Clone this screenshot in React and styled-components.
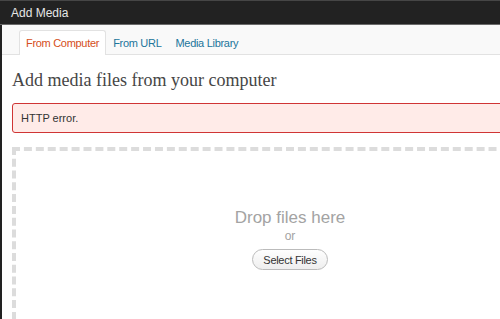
import React from "react";
import styled, { createGlobalStyle } from "styled-components";

const Global = createGlobalStyle`
  html, body { margin: 0; padding: 0; background: #fff; overflow: hidden; }
  body { width: 500px; height: 319px; font-family: "Liberation Sans", Arial, sans-serif; }
`;

const Modal = styled.div`
  width: 500px;
  height: 319px;
  display: flex;
  flex-direction: column;
  background: #222;
  overflow: hidden;
`;

const TitleBar = styled.div`
  height: 23px;
  flex: none;
  background: #222;
  border-top: 1px solid #464646;
  border-bottom: 1px solid #6a6a6a;
  padding-left: 11px;
  display: flex;
  align-items: center;
  color: #e6e6e6;
  font-size: 12px;
`;

const Body = styled.div`
  flex: 1;
  margin-left: 2px;
  background: #fff;
  display: flex;
  flex-direction: column;
  min-height: 0;
`;

const TabBar = styled.div`
  flex: none;
  height: 29px;
  background: #f9f9f9;
  border-bottom: 1px solid #e2e2e2;
  display: flex;
  align-items: flex-end;
  padding-left: 17px;
`;

const Tab = styled.div`
  height: 25px;
  box-sizing: border-box;
  padding: 0 6px;
  display: flex;
  align-items: center;
  font-size: 11px;
  letter-spacing: -0.3px;
  color: ${(p) => (p.$active ? "#d54e21" : "#21759b")};
  background: ${(p) => (p.$active ? "#fff" : "transparent")};
  border: 1px solid ${(p) => (p.$active ? "#e2e2e2" : "transparent")};
  border-bottom: none;
  border-radius: 3px 3px 0 0;
  margin-bottom: -1px;
`;

const Content = styled.div`
  padding-left: 10px;
  display: flex;
  flex-direction: column;
`;

const Heading = styled.h3`
  margin: 14px 0 0;
  font-family: "Liberation Serif", Georgia, serif;
  font-weight: normal;
  font-size: 18px;
  line-height: 22px;
  color: #464646;
`;

const ErrorBox = styled.div`
  margin-top: 12px;
  height: 30px;
  box-sizing: border-box;
  width: 520px;
  background: #ffebe8;
  border: 1px solid #d03535;
  border-radius: 3px;
  padding: 0 8px;
  display: flex;
  align-items: center;
  font-size: 11px;
  color: #333;
`;

const DropZone = styled.div`
  margin-top: 14px;
  width: 556px;
  height: 220px;
  box-sizing: border-box;
  border: 4px dashed #dcdcdc;
  display: flex;
  flex-direction: column;
  align-items: center;
  padding-top: 57px;
`;

const DropTitle = styled.div`
  font-size: 17px;
  line-height: 20px;
  color: #a3a3a3;
`;

const Or = styled.div`
  font-size: 12px;
  line-height: 16px;
  color: #a3a3a3;
`;

const SelectButton = styled.button`
  margin-top: 5px;
  height: 21px;
  padding: 0 10px;
  border: 1px solid #bbb;
  border-radius: 11px;
  background: linear-gradient(#fefefe, #eeeeee);
  font-family: "Liberation Sans", Arial, sans-serif;
  font-size: 11px;
  color: #333;
  letter-spacing: -0.3px;
`;

export default function App() {
  return (
    <>
      <Global />
      <Modal>
        <TitleBar>Add Media</TitleBar>
        <Body>
          <TabBar>
            <Tab $active>From Computer</Tab>
            <Tab>From URL</Tab>
            <Tab>Media Library</Tab>
          </TabBar>
          <Content>
            <Heading>Add media files from your computer</Heading>
            <ErrorBox>HTTP error.</ErrorBox>
            <DropZone>
              <DropTitle>Drop files here</DropTitle>
              <Or>or</Or>
              <SelectButton>Select Files</SelectButton>
            </DropZone>
          </Content>
        </Body>
      </Modal>
    </>
  );
}
